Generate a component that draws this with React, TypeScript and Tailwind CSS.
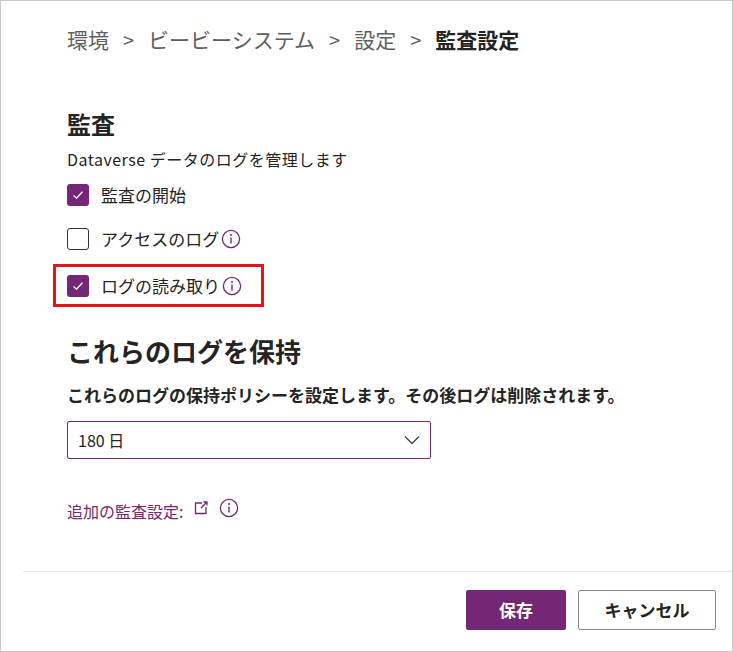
const Check = () => (
  <svg width="14" height="14" viewBox="0 0 14 14" fill="none">
    <path d="M2.5 7.5 L5.5 10.2 L11.5 3.8" stroke="white" strokeWidth="1.3" />
  </svg>
);

const Info = () => (
  <svg width="20" height="20" viewBox="0 0 20 20" fill="none" className="ml-[2px]">
    <circle cx="10" cy="10" r="8.6" stroke="#742774" strokeWidth="1.3" />
    <circle cx="10" cy="6" r="1" fill="#742774" />
    <path d="M10 8.6V14.5" stroke="#742774" strokeWidth="1.4" />
  </svg>
);

const Box = ({ on }: { on: boolean }) =>
  on ? (
    <span className="w-[22px] h-[22px] rounded-[3px] bg-[#742774] flex items-center justify-center"><Check /></span>
  ) : (
    <span className="w-[22px] h-[22px] rounded-[3px] border border-[#333] bg-white" />
  );

export default function App() {
  return (
    <div
      className="w-[733px] h-[652px] border border-[#c8c8c8] bg-white text-[#252423] flex flex-col overflow-hidden"
      style={{ fontFamily: '"Noto Sans CJK JP", "Noto Sans", sans-serif' }}
    >
      <div className="pl-[66px] pr-6 flex-1">
        <div className="mt-[22px] flex items-center gap-[14px] text-[21px] text-[#605e5c] h-[34px]">
          <span>環境</span><span className="text-[20px]">&gt;</span>
          <span>ビービーシステム</span><span className="text-[20px]">&gt;</span>
          <span>設定</span><span className="text-[20px]">&gt;</span>
          <span className="font-bold text-[#252423]">監査設定</span>
        </div>
        <h2 className="mt-[50px] text-[24px] font-bold leading-[34px]">監査</h2>
        <p className="mt-[6px] text-[16px] tracking-[0.5px] leading-[24px]">Dataverse データのログを管理します</p>
        <div className="mt-[12px] flex items-center gap-[12px] h-[24px] text-[17px]">
          <Box on /> <span>監査の開始</span>
        </div>
        <div className="mt-[20px] flex items-center gap-[12px] h-[24px] text-[17px]">
          <Box on={false} /> <span className="flex items-center">アクセスのログ<Info /></span>
        </div>
        <div className="-ml-[14px] mt-[13px] w-[211px] h-[43px] border-[3px] border-[#e8141c] pl-[11px] flex items-center gap-[12px] text-[17px]">
          <Box on /> <span className="flex items-center">ログの読み取り<Info /></span>
        </div>
        <h2 className="mt-[26px] text-[26px] font-bold leading-[36px]">これらのログを保持</h2>
        <p className="mt-[14px] text-[17px] font-bold leading-[24px]">これらのログの保持ポリシーを設定します。その後ログは削除されます。</p>
        <div className="mt-[14px] w-[364px] h-[38px] border border-[#742774] rounded-[2px] flex items-center justify-between px-[10px] text-[16px]">
          <span>180 日</span>
          <svg width="16" height="10" viewBox="0 0 16 10" fill="none"><path d="M1 1.5 L8 8.5 L15 1.5" stroke="#444" strokeWidth="1.3" /></svg>
        </div>
        <div className="mt-[40px] flex items-center text-[16px] text-[#742774]">
          <span>追加の監査設定:</span>
          <svg width="16" height="16" viewBox="0 0 16 16" fill="none" className="ml-[10px] -mt-[6px]">
            <path d="M9 3H2.5V13.5H13V7" stroke="#742774" strokeWidth="1.3" />
            <path d="M8 8L14 2M10.5 2H14V5.5" stroke="#742774" strokeWidth="1.3" />
          </svg>
          <span className="ml-[8px] -mt-[6px]"><Info /></span>
        </div>
      </div>
      <div className="ml-[22px] border-t border-[#e5e5e5] h-[80px] flex items-center justify-end gap-[12px] pr-[16px] pb-[4px]">
        <button className="w-[100px] h-[40px] bg-[#742774] text-white font-bold text-[17px] rounded-[2px]">保存</button>
        <button className="w-[138px] h-[40px] border border-[#8a8886] text-[#252423] font-bold text-[17px] rounded-[2px]">キャンセル</button>
      </div>
    </div>
  );
}
